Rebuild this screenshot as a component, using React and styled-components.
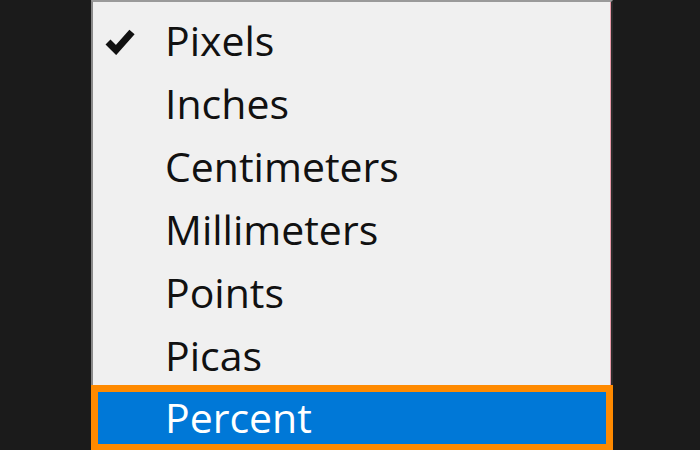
import React from 'react'
import styled, { createGlobalStyle } from 'styled-components'

const Global = createGlobalStyle`
  html, body {
    margin: 0;
    padding: 0;
    background: #1b1b1b;
    overflow: hidden;
  }
`

const Page = styled.div`
  width: 700px;
  height: 450px;
  background: #1b1b1b;
  display: flex;
  padding-left: 91px;
  box-sizing: border-box;
  overflow: hidden;
`

const Menu = styled.ul`
  list-style: none;
  margin: 0;
  width: 522px;
  height: 470px;
  padding: 8px 0 0;
  box-sizing: border-box;
  background: #f0f0f0;
  border-top: 2px solid #9a9a9a;
  border-left: 2px solid #8a8a8a;
  border-right: 2px solid #2c2c2c;
  box-shadow: inset -1px 0 0 #e79aa8;
  font-family: "Open Sans", "Noto Sans", sans-serif;
  font-size: 41px;
  color: #111;
`

const Item = styled.li`
  display: flex;
  align-items: center;
  height: ${p => (p.$selected ? '52px' : '63px')};
  margin: ${p => (p.$selected ? '4px 5px 0 5px' : '0')};
  background: ${p => (p.$selected ? '#0078d7' : 'transparent')};
  color: ${p => (p.$selected ? '#fff' : '#111')};
  box-shadow: ${p => (p.$selected ? '0 0 0 7px #ff8a00' : 'none')};
`

const Mark = styled.span`
  width: ${p => (p.$selected ? '67px' : '72px')};
  flex: none;
  display: flex;
  padding-left: 12px;
  box-sizing: border-box;
`

const Label = styled.span`
  line-height: 1;
  padding-bottom: 2px;
`

const Check = () => (
  <svg width="30" height="26" viewBox="0 0 30 26">
    <path d="M3 13 L11 21 L27 3" fill="none" stroke="#111" strokeWidth="7" strokeLinejoin="miter" />
  </svg>
)

const units = ['Pixels', 'Inches', 'Centimeters', 'Millimeters', 'Points', 'Picas', 'Percent']

export default function App() {
  return (
    <Page>
      <Global />
      <Menu>
        {units.map((u, i) => {
          const selected = u === 'Percent'
          return (
            <Item key={u} $selected={selected}>
              <Mark $selected={selected}>{i === 0 && <Check />}</Mark>
              <Label>{u}</Label>
            </Item>
          )
        })}
      </Menu>
    </Page>
  )
}
